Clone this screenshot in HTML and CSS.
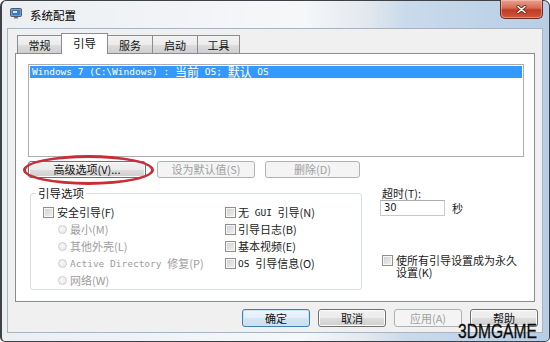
FILE: index.html
```html
<!DOCTYPE html>
<html lang="zh-CN">
<head>
<meta charset="utf-8">
<title>系统配置</title>
<link rel="stylesheet" href="styles.css">
</head>
<body>
<div class="window">
  <div class="titlebar">
    <svg class="appicon" width="12" height="11" viewBox="0 0 12 11">
      <rect x="0.5" y="0.5" width="11" height="8" rx="1" fill="#8a96a6" stroke="#4f5b6b"/>
      <rect x="2" y="2" width="8" height="5" fill="#3a78c8"/>
      <rect x="3" y="3" width="4" height="2" fill="#d8e8fa"/>
      <rect x="4" y="9" width="4" height="1.5" fill="#6b7787"/>
    </svg>
    <span class="title">系统配置</span>
    <div class="close">
      <svg width="11" height="9" viewBox="0 0 11 9">
        <path d="M2 1.5 L9 7.5 M9 1.5 L2 7.5" stroke="#6a2418" stroke-width="3" stroke-linecap="round"/>
        <path d="M2 1.5 L9 7.5 M9 1.5 L2 7.5" stroke="#ffffff" stroke-width="1.6" stroke-linecap="round"/>
      </svg>
    </div>
  </div>
  <div class="client">
    <div class="tabs">
      <div class="tab w44">常规</div>
      <div class="tab active">引导</div>
      <div class="tab w44">服务</div>
      <div class="tab w45">启动</div>
      <div class="tab w43">工具</div>
    </div>
    <div class="panel">
      <div class="oslist">
        <div class="row sel"><span class="lat">Windows 7 (C:\Windows) : </span>当前<span class="lat"> OS; </span>默认<span class="lat"> OS</span></div>
      </div>
      <div class="btnrow">
        <div class="btn adv">高级选项(V)...<span class="ellipse"></span></div>
        <div class="btn dis def2">设为默认值(S)</div>
        <div class="btn dis del">删除(D)</div>
      </div>
      <div class="lower">
        <fieldset class="group">
          <legend>引导选项</legend>
          <div class="cols">
            <div class="col left">
              <div class="item chk"><span class="box"></span>安全引导(F)</div>
              <div class="item rad"><span class="dot"></span>最小(M)</div>
              <div class="item rad"><span class="dot"></span>其他外壳(L)</div>
              <div class="item rad"><span class="dot"></span><span class="lat">Active Directory </span>修复(P)</div>
              <div class="item rad"><span class="dot"></span>网络(W)</div>
            </div>
            <div class="col right">
              <div class="item chk"><span class="box"></span>无<span class="lat"> GUI </span>引导(N)</div>
              <div class="item chk"><span class="box"></span>引导日志(B)</div>
              <div class="item chk"><span class="box"></span>基本视频(E)</div>
              <div class="item chk"><span class="box"></span><span class="lat">OS </span>引导信息(O)</div>
            </div>
          </div>
        </fieldset>
        <div class="side">
          <div class="tlabel">超时(T):</div>
          <div class="trow"><div class="input">30</div><span class="unit">秒</span></div>
          <div class="perm"><span class="box"></span><span class="ptext">使所有引导设置成为永久设置(K)</span></div>
        </div>
      </div>
    </div>
    <div class="footer">
      <div class="btn fb def">确定</div>
      <div class="btn fb">取消</div>
      <div class="btn fb dis">应用(A)</div>
      <div class="btn fb">帮助</div>
    </div>
  </div>
  <div class="watermark">3DMGAME</div>
</div>
</body>
</html>
```

FILE: styles.css
```css
* { box-sizing: border-box; }
html, body { margin: 0; padding: 0; }
body {
  width: 550px;
  height: 342px;
  overflow: hidden;
  background: #ffffff;
  font-family: "Noto Sans CJK SC", "Liberation Sans", sans-serif;
  font-size: 11px;
  color: #1a1a1a;
}
.window {
  position: relative;
  width: 550px;
  height: 342px;
  border: 1px solid #3e4246;
  border-left-width: 2px;
  border-radius: 6px 6px 5px 5px;
  background: linear-gradient(90deg, #eceff2 0%, #f5f7f9 55%, #e4e9ee 66%, #c9daeb 74%, #b7cee6 100%);
  display: flex;
  flex-direction: column;
}
.titlebar {
  height: 27px;
  display: flex;
  align-items: center;
  padding: 0 6px 0 8px;
}
.appicon { margin-right: 8px; margin-top: -2px; }
.title { font-size: 11.5px; color: #000; line-height: 14px; }
.close {
  align-self: flex-start;
  margin-left: auto;
  margin-top: -1px;
  width: 43px;
  height: 19px;
  border: 1px solid #6b2a1e;
  border-top: none;
  border-radius: 0 0 5px 5px;
  background: linear-gradient(#e8a292 0%, #d66a52 45%, #c23a24 55%, #cc5840 100%);
  box-shadow: inset 0 0 0 1px rgba(255, 210, 200, 0.45);
  display: flex;
  align-items: center;
  justify-content: center;
}
.client {
  margin: 0 6px 0 5px;
  height: 305px;
  background: #f0f0f0;
  border: 1px solid #a9b4c0;
  padding: 4px 7px 0 7px;
  position: relative;
}
.tabs {
  display: flex;
  align-items: flex-end;
  height: 20px;
  padding-left: 2px;
}
.tab {
  height: 18px;
  border: 1px solid #898c95;
  border-bottom: none;
  border-right: none;
  background: linear-gradient(#f3f3f3 0%, #ebebeb 50%, #dddddd 51%, #cfcfcf 100%);
  display: flex;
  align-items: center;
  justify-content: center;
  font-size: 11px;
  line-height: 14px;
  color: #111;
}
.tab.w43 { width: 43px; border-right: 1px solid #898c95; }
.tab.w44 { width: 44px; }
.tab.w45 { width: 45px; }
.tab.active {
  width: 47px;
  height: 21px;
  margin-bottom: -1px;
  background: #ffffff;
  position: relative;
  z-index: 1;
  padding-bottom: 3px;
  border-right: 1px solid #898c95;
  font-size: 11.5px;
}
.tab.active + .tab { border-left: none; }
.panel {
  height: 249px;
  border: 1px solid #898c95;
  background: #ffffff;
  padding: 10px 10px 0 12px;
}
.oslist {
  width: 496px;
  height: 93px;
  border: 1px solid #abadb3;
  background: #fff;
  padding: 1px 1px 0 1px;
}
.row {
  height: 12px;
  line-height: 12px;
  padding-left: 2px;
  font-size: 12px;
  white-space: pre;
  display: flex;
  align-items: center;
}
.row.sel { background: #3399ff; color: #ffffff; }
.lat {
  font-family: "DejaVu Sans Mono", "Liberation Mono", monospace;
  font-size: 9.5px;
  white-space: pre;
}
.btnrow {
  display: flex;
  margin-top: 4px;
  height: 17px;
}
.btn {
  height: 17px;
  border: 1px solid #707070;
  border-radius: 3px;
  background: linear-gradient(#f2f2f2 0%, #ebebeb 50%, #dddddd 51%, #cfcfcf 100%);
  box-shadow: inset 0 0 0 1px #fbfbfb;
  display: flex;
  align-items: center;
  justify-content: center;
  font-size: 11px;
  line-height: 13px;
  color: #111;
  position: relative;
}
.btn.dis {
  border-color: #adb2b5;
  background: #f4f4f4;
  box-shadow: none;
  color: #a0a0a0;
}
.btn.adv { width: 118px; margin-right: 11px; }
.btn.def2 { width: 98px; margin-right: 10px; }
.btn.del { width: 95px; }
.ellipse {
  position: absolute;
  left: -6px;
  top: -7px;
  width: 131px;
  height: 30px;
  border: 3px solid #c92e38;
  border-radius: 50%;
}
.lower {
  display: flex;
  margin-top: 8px;
}
.group {
  margin: 0 0 0 2px;
  width: 332px;
  height: 104px;
  padding: 4px 0 0 12px;
  border: 1px solid #d5dfe5;
  border-radius: 3px;
  min-width: 0;
}
.group legend {
  padding: 0 2px;
  margin-left: -7px;
  font-size: 11.5px;
  line-height: 14px;
  color: #111;
}
.cols { display: flex; }
.col.left { width: 182px; }
.item {
  height: 17px;
  display: flex;
  align-items: center;
  white-space: nowrap;
  line-height: 13px;
}
.box {
  width: 11px;
  height: 11px;
  border: 1px solid #8e8f8f;
  background: linear-gradient(135deg, #cfcfcf 0%, #e2e2e2 55%, #f2f2f2 100%);
  box-shadow: inset 0 0 0 1px #f6f6f6;
  margin-right: 3px;
  flex: none;
}
.col.right .box { margin-right: 2px; }
.rad { padding-left: 15px; color: #9d9d9d; }
.dot {
  width: 9px;
  height: 9px;
  border-radius: 50%;
  border: 1px solid #cdcdcd;
  background: radial-gradient(circle at 40% 40%, #f8f8f8 0%, #e6e6e6 100%);
  margin-right: 3px;
  flex: none;
}
.side {
  margin-left: 18px;
  width: 140px;
}
.tlabel { line-height: 14px; height: 14px; padding-left: 2px; }
.trow {
  display: flex;
  align-items: center;
  height: 16px;
}
.input {
  width: 65px;
  height: 16px;
  border: 1px solid #c5cad0;
  border-top-color: #abadb3;
  background: #fff;
  padding-left: 3px;
  font-family: "DejaVu Sans", sans-serif;
  font-size: 10px;
  line-height: 14px;
}
.unit { margin-left: 7px; }
.perm {
  display: flex;
  align-items: flex-start;
  margin-top: 38px;
  padding-left: 2px;
}
.perm .box { margin-top: 1px; }
.ptext {
  width: 125px;
  line-height: 12px;
  font-size: 11px;
}
.footer {
  display: flex;
  justify-content: flex-end;
  gap: 8px;
  padding-top: 7px;
  padding-right: 4px;
  margin-right: -7px;
}
.btn.fb { width: 68px; height: 18px; }
.btn.def {
  border-color: #3c7fb1;
  box-shadow: inset 0 0 0 1px #c8e6f8;
  background: linear-gradient(#eef5fb 0%, #e3eef8 50%, #d5e6f4 51%, #c9def0 100%);
}
.watermark {
  position: absolute;
  left: 456px;
  top: 320px;
  font-family: "Liberation Sans", sans-serif;
  font-size: 20px;
  line-height: 20px;
  color: #0a0a0a;
  transform: scaleX(0.78);
  transform-origin: left top;
  white-space: nowrap;
  -webkit-text-stroke: 0.3px #0a0a0a;
}
```
